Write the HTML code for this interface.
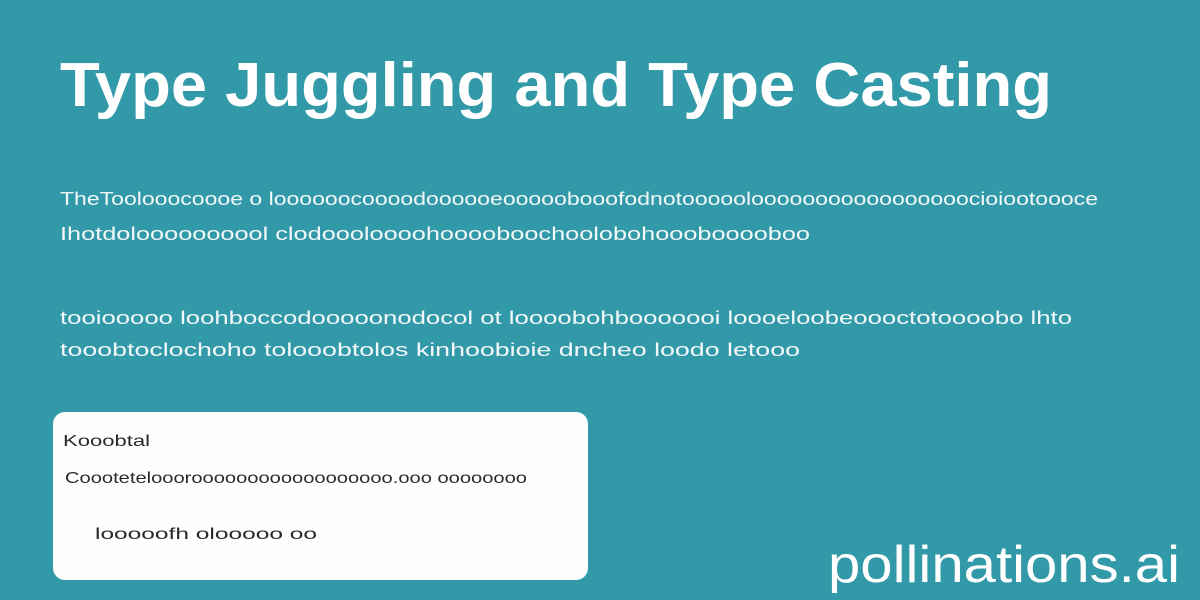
<!DOCTYPE html>
<html><head><meta charset="utf-8"><style>
html,body{margin:0;padding:0}
body{width:1200px;height:600px;background:#3299a8;overflow:hidden;position:relative;font-family:"Liberation Sans",sans-serif}
svg{position:absolute;left:0;top:0}
</style></head><body>
<svg width="1200" height="600" viewBox="0 0 1200 600">
<text x="60" y="106" font-size="62" font-weight="bold" fill="#fff" textLength="992" lengthAdjust="spacingAndGlyphs" font-family="Liberation Sans, sans-serif">Type Juggling and Type Casting</text>
<g fill="#f2f8f9" font-size="18" font-family="Liberation Sans, sans-serif">
<text x="60" y="205" textLength="1038" lengthAdjust="spacingAndGlyphs">TheToolooocoooe o loooooocoooodoooooeooooobooofodnotooooolooooooooooooooooocioiootoooce</text>
<text x="60" y="240" textLength="750" lengthAdjust="spacingAndGlyphs">Ihotdoloooooooool clodoooloooohooooboochoolobohooobooooboo</text>
<text x="60" y="324" textLength="1012" lengthAdjust="spacingAndGlyphs">tooiooooo  loohboccodooooonodocol ot loooobohbooooooi  loooeloobeoooctotoooobo  lhto</text>
<text x="60" y="356" textLength="740" lengthAdjust="spacingAndGlyphs">tooobtoclochoho  tolooobtolos  kinhoobioie  dncheo  loodo  letooo</text>
</g>
<rect x="53" y="412" width="535" height="168" rx="12" fill="#fefefe"/>
<g fill="#2a2a2a" font-size="16" font-family="Liberation Sans, sans-serif">
<text x="63" y="446" textLength="87" lengthAdjust="spacingAndGlyphs">Kooobtal</text>
<text x="65" y="483" textLength="462" lengthAdjust="spacingAndGlyphs">Coooteteloooroooooooooooooooooo.ooo oooooooo</text>
<text x="95" y="539" textLength="222" lengthAdjust="spacingAndGlyphs">looooofh olooooo    oo</text>
</g>
<text x="828" y="582" font-size="52" fill="#fff" textLength="352" lengthAdjust="spacingAndGlyphs" font-family="Liberation Sans, sans-serif">pollinations.ai</text>
</svg>
</body></html>
